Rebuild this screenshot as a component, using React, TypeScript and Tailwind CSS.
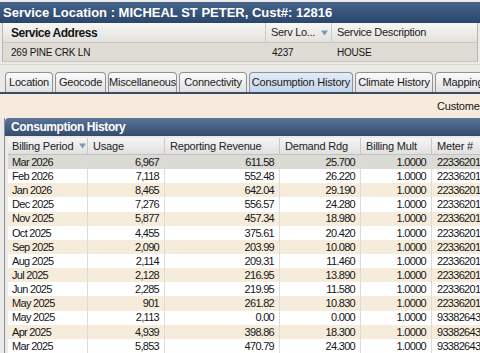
import React from 'react';

const rows = [
  ['Mar 2026', '6,967', '611.58', '25.700', '1.0000', '22336201'],
  ['Feb 2026', '7,118', '552.48', '26.220', '1.0000', '22336201'],
  ['Jan 2026', '8,465', '642.04', '29.190', '1.0000', '22336201'],
  ['Dec 2025', '7,276', '556.57', '24.280', '1.0000', '22336201'],
  ['Nov 2025', '5,877', '457.34', '18.980', '1.0000', '22336201'],
  ['Oct 2025', '4,455', '375.61', '20.420', '1.0000', '22336201'],
  ['Sep 2025', '2,090', '203.99', '10.080', '1.0000', '22336201'],
  ['Aug 2025', '2,114', '209.31', '11.460', '1.0000', '22336201'],
  ['Jul 2025', '2,128', '216.95', '13.890', '1.0000', '22336201'],
  ['Jun 2025', '2,285', '219.95', '11.580', '1.0000', '22336201'],
  ['May 2025', '901', '261.82', '10.830', '1.0000', '22336201'],
  ['May 2025', '2,113', '0.00', '0.000', '1.0000', '93382643'],
  ['Apr 2025', '4,939', '398.86', '18.300', '1.0000', '93382643'],
  ['Mar 2025', '5,853', '470.79', '24.300', '1.0000', '93382643'],
];

const tabs: [string, string][] = [
  ['Location', 'w-[48px]'],
  ['Geocode', 'w-[51px]'],
  ['Miscellaneous', 'w-[69px]'],
  ['Connectivity', 'w-[68px]'],
  ['Consumption History', 'w-[104px]'],
  ['Climate History', 'w-[78px]'],
  ['Mapping', 'w-[56px]'],
];

const SortArrow = () => (
  <svg width="7" height="6" viewBox="0 0 7 6" className="inline-block ml-[6px] shrink-0">
    <path d="M0 0.5 L7 0.5 L3.5 5.5 Z" fill="#7a98ba" />
  </svg>
);

const App: React.FC = () => {
  return (
    <div className="w-[480px] h-[353px] overflow-hidden bg-[#eceae6] font-['Liberation_Sans',Arial,sans-serif] text-[11px] text-[#151515] whitespace-nowrap">
      {/* Title bar */}
      <div className="mt-[2px] h-[21px] bg-gradient-to-b from-[#45638b] to-[#2b466a] flex items-center pl-[3px] text-white font-bold text-[13px]">
        Service Location : MICHEAL ST PETER, Cust#: 12816
      </div>

      {/* Service address grid */}
      <div className="mx-[2px] border-x border-[#b9b6ae]">
        <div className="h-[20px] flex bg-gradient-to-b from-[#f7f7f5] to-[#e2e1dd] border-b border-[#c9c6bf] tracking-[-0.3px]">
          <div className="w-[263px] pl-[8px] flex items-center font-bold text-[12px] tracking-[-0.5px] border-r border-[#cfccc6]">Service Address</div>
          <div className="w-[66px] pl-[5px] flex items-center text-[11px] text-[#222] border-r border-[#cfccc6]">Serv Lo...<SortArrow /></div>
          <div className="flex-1 pl-[5px] flex items-center text-[11px] text-[#222]">Service Description</div>
        </div>
        <div className="h-[19px] flex bg-[#dfdcd5] border-b border-[#c9c6bf] text-[10px] tracking-[-0.2px]">
          <div className="w-[263px] pl-[8px] flex items-center">269 PINE CRK LN</div>
          <div className="w-[66px] pl-[6px] flex items-center">4237</div>
          <div className="flex-1 pl-[5px] flex items-center">HOUSE</div>
        </div>
      </div>
      <div className="mt-[2px] h-px bg-[#d9d6cf]" />

      {/* Tabs */}
      <div className="mt-[6px] h-[21px] flex items-end pl-[5px] gap-[2px]">
        {tabs.map(([t, w]) => (
          <div
            key={t}
            className={`shrink-0 ${w} h-[20px] flex items-center justify-center rounded-t-[4px] border border-b-0 border-[#8f9399] text-[11px] tracking-[-0.2px] text-[#1a1a1a] ${
              t === 'Consumption History'
                ? 'bg-gradient-to-b from-[#e3ecf6] to-[#c4d5e9]'
                : 'bg-gradient-to-b from-[#fbfbfb] to-[#e1e1e1]'
            }`}
          >
            {t}
          </div>
        ))}
      </div>
      <div className="h-[2px] bg-[#3a4d66]" />

      {/* Beige strip */}
      <div className="h-[24px] bg-[#f6ebdc] flex items-center pl-[437px] text-[11px] tracking-[-0.2px]">
        Customer
      </div>

      {/* Consumption history panel */}
      <div className="ml-[4px] border-l border-[#8a8f96] bg-[#f6ebdc]">
        <div className="h-[18px] rounded-tl-[4px] bg-gradient-to-b from-[#5c7698] to-[#344b6c] flex items-center pl-[6px] text-white font-bold text-[12px] tracking-[-0.4px]">
          Consumption History
        </div>
        <div className="pt-[2px] pl-[3px] bg-[#eceae6]">
          <div className="h-[17px] flex bg-gradient-to-b from-[#f6f6f6] to-[#e0e0e0] border-b border-[#c2c2c2] text-[11px] tracking-[-0.2px] text-[#222]">
            <div className="w-[80px] shrink-0 pl-[4px] flex items-center border-r border-[#c8c8c8]">Billing Period<SortArrow /></div>
            <div className="w-[77px] shrink-0 pl-[5px] flex items-center border-r border-[#c8c8c8]">Usage</div>
            <div className="w-[115px] shrink-0 pl-[5px] flex items-center border-r border-[#c8c8c8]">Reporting Revenue</div>
            <div className="w-[81px] shrink-0 pl-[5px] flex items-center border-r border-[#c8c8c8]">Demand Rdg</div>
            <div className="w-[71px] shrink-0 pl-[5px] flex items-center border-r border-[#c8c8c8]">Billing Mult</div>
            <div className="w-[60px] shrink-0 pl-[5px] flex items-center">Meter #</div>
          </div>
          {rows.map((r, i) => (
            <div
              key={i}
              className={`h-[14.15px] flex text-[11px] tracking-[-0.7px] ${
                i === 0 ? 'bg-[#dcdad4]' : i % 2 === 0 ? 'bg-[#f6ecdc]' : 'bg-white'
              }`}
            >
              <div className="w-[80px] shrink-0 pl-[4px] flex items-center border-r border-[#dcdcdc]">{r[0]}</div>
              <div className="w-[77px] shrink-0 pr-[5px] flex items-center justify-end border-r border-[#dcdcdc]">{r[1]}</div>
              <div className="w-[115px] shrink-0 pr-[5px] flex items-center justify-end border-r border-[#dcdcdc]">{r[2]}</div>
              <div className="w-[81px] shrink-0 pr-[5px] flex items-center justify-end border-r border-[#dcdcdc]">{r[3]}</div>
              <div className="w-[71px] shrink-0 pr-[5px] flex items-center justify-end border-r border-[#dcdcdc]">{r[4]}</div>
              <div className="w-[60px] shrink-0 pl-[5px] flex items-center">{r[5]}</div>
            </div>
          ))}
        </div>
      </div>
    </div>
  );
};

export default App;
